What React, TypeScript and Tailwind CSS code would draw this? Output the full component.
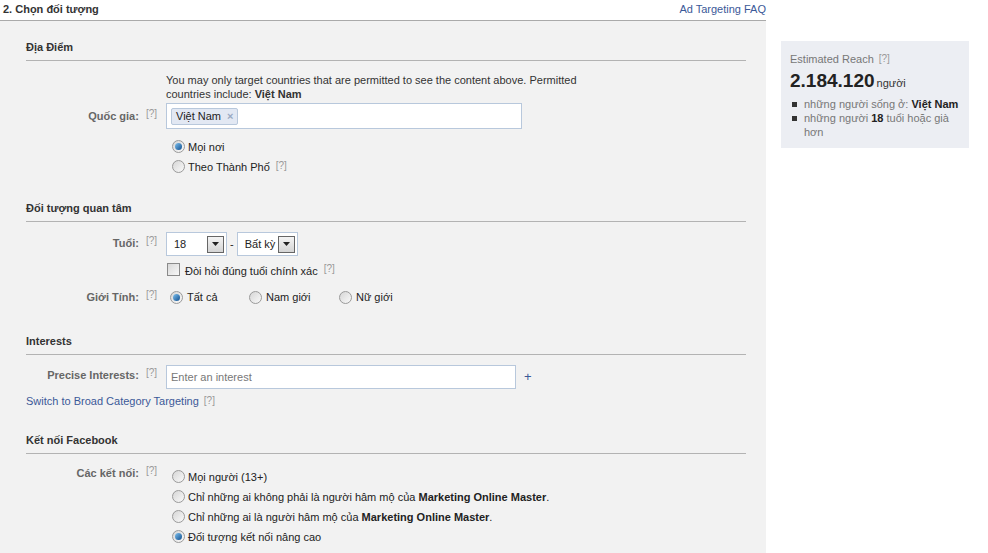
import React from 'react';

const font = "font-['Liberation_Sans',Arial,sans-serif]";

const Help: React.FC<{ className?: string }> = ({ className }) => (
  <span className={`text-[10px] leading-[14px] text-[#999] ${className ?? ''}`}>[?]</span>
);

const Radio: React.FC<{ checked?: boolean }> = ({ checked }) => (
  <span className="relative inline-flex h-[13px] w-[13px] shrink-0 items-center justify-center rounded-full border border-[#9a9a9a] bg-gradient-to-br from-[#d6d6d6] to-[#fafafa]">
    {checked && (
      <span className="h-[7px] w-[7px] rounded-full bg-gradient-to-br from-[#7fc2ef] to-[#0a4f8f]" />
    )}
  </span>
);

const SectionTitle: React.FC<{ children: React.ReactNode; className?: string }> = ({
  children,
  className,
}) => (
  <div className={`mr-5 border-b border-[#b3b3b3] pb-[6px] text-[11px] font-bold leading-[14px] text-[#333] ${className ?? ''}`}>
    {children}
  </div>
);

const Row: React.FC<{ label: string; children: React.ReactNode; className?: string; labelClass?: string }> = ({
  label,
  children,
  className,
  labelClass,
}) => (
  <div className={`flex ${className ?? ''}`}>
    <div className={`flex w-[166px] shrink-0 items-start justify-end gap-[7px] pr-[9px] ${labelClass ?? ''}`}>
      <span className="text-[11px] font-bold text-[#666]">{label}</span>
      <Help className="mt-[-2px]" />
    </div>
    <div className="flex-1">{children}</div>
  </div>
);

const Select: React.FC<{ value: string; width: string }> = ({ value, width }) => (
  <div className={`flex h-[24px] items-center border border-[#b8c8dc] bg-white pl-[7px] pr-[2px] ${width}`}>
    <span className="flex-1 text-[11px] text-[#222]">{value}</span>
    <span className="flex h-[17px] w-[17px] items-center justify-center border border-[#666] bg-gradient-to-b from-[#f4f4f4] to-[#d4d4d4]">
      <svg width="7" height="4" viewBox="0 0 7 4">
        <path d="M0 0h7L3.5 4z" fill="#222" />
      </svg>
    </span>
  </div>
);

const RadioLine: React.FC<{ checked?: boolean; children: React.ReactNode }> = ({ checked, children }) => (
  <label className="flex h-[14px] items-center gap-[3px]">
    <Radio checked={checked} />
    <span className="mt-[2px] text-[11px] text-[#222]">{children}</span>
  </label>
);

const App: React.FC = () => {
  return (
    <div className={`h-[553px] w-[988px] overflow-hidden bg-white ${font} text-[11px] leading-[14px] text-[#333]`}>
      <div className="flex items-start">
        {/* main column */}
        <div className="w-[766px]">
          <div className="flex h-[21px] items-center justify-between border-b border-[#aaa] pl-[3px] pb-[3px]">
            <span className="text-[11px] font-bold text-[#333]">2. Chọn đối tượng</span>
            <a className="text-[11px] text-[#3b5998]">Ad Targeting FAQ</a>
          </div>

          <div className="h-[533px] bg-[#f2f2f2] pl-[26px] pt-[19px]">
            {/* Địa điểm */}
            <SectionTitle>Địa Điểm</SectionTitle>
            <div className="ml-[-26px] mt-[12px]">
              <div className="flex">
                <div className="w-[166px] shrink-0" />
                <p className="w-[430px] text-[11px] text-[#333]">
                  You may only target countries that are permitted to see the content above. Permitted
                  countries include: <b>Việt Nam</b>
                </p>
              </div>
              <Row label="Quốc gia:" className="mt-[2px]" labelClass="pt-[6px]">
                <div className="flex h-[26px] w-[356px] items-center border border-[#b8c8dc] bg-white px-[4px]">
                  <span className="flex h-[17px] items-center gap-[6px] rounded-[2px] border border-[#b8c8dc] bg-[#e2e8f3] px-[4px] text-[11px] text-[#222]">
                    Việt Nam <span className="text-[11px] font-bold text-[#9aa8c2]">×</span>
                  </span>
                </div>
                <div className="mt-[10px] flex flex-col gap-[6px] pl-[6px]">
                  <RadioLine checked>Mọi nơi</RadioLine>
                  <label className="flex h-[14px] items-center gap-[3px]">
                    <Radio />
                    <span className="mt-[2px] text-[11px] text-[#222]">Theo Thành Phố</span>
                    <Help className="ml-[3px]" />
                  </label>
                </div>
              </Row>
            </div>

            {/* Đối tượng quan tâm */}
            <SectionTitle className="mt-[28px]">Đối tượng quan tâm</SectionTitle>
            <div className="ml-[-26px] mt-[10px]">
              <Row label="Tuổi:" labelClass="pt-[4px]">
                <div className="flex items-center gap-[3px]">
                  <Select value="18" width="w-[61px]" />
                  <span className="text-[11px] text-[#222]">-</span>
                  <Select value="Bất kỳ" width="w-[61px]" />
                </div>
                <label className="mt-[6px] flex h-[14px] items-center gap-[5px] pl-[1px]">
                  <span className="h-[13px] w-[13px] border border-[#8a8a8a] bg-gradient-to-br from-[#d8d8d8] to-[#f8f8f8]" />
                  <span className="mt-[3px] text-[11px] text-[#222]">Đòi hỏi đúng tuổi chính xác</span>
                  <Help className="ml-[1px]" />
                </label>
              </Row>
              <Row label="Giới Tính:" className="mt-[14px]">
                <div className="flex h-[14px] items-center pl-[4px]">
                  <label className="flex w-[79px] items-center gap-[4px]">
                    <Radio checked />
                    <span className="text-[11px] text-[#222]">Tất cả</span>
                  </label>
                  <label className="flex w-[90px] items-center gap-[4px]">
                    <Radio />
                    <span className="text-[11px] text-[#222]">Nam giới</span>
                  </label>
                  <label className="flex items-center gap-[4px]">
                    <Radio />
                    <span className="text-[11px] text-[#222]">Nữ giới</span>
                  </label>
                </div>
              </Row>
            </div>

            {/* Interests */}
            <SectionTitle className="mt-[30px]">Interests</SectionTitle>
            <div className="ml-[-26px] mt-[10px]">
              <Row label="Precise Interests:" labelClass="pt-[3px]">
                <div className="flex items-center">
                  <div className="flex h-[24px] w-[350px] items-center border border-[#b8c8dc] bg-white px-[4px] text-[11px] text-[#777]">
                    Enter an interest
                  </div>
                  <span className="ml-[8px] text-[13px] text-[#3b5998]">+</span>
                </div>
              </Row>
            </div>
            <div className="mt-[5px] flex items-center gap-[5px]">
              <a className="text-[11px] text-[#3b5998]">Switch to Broad Category Targeting</a>
              <Help />
            </div>

            {/* Kết nối Facebook */}
            <SectionTitle className="mt-[25px]">Kết nối Facebook</SectionTitle>
            <div className="ml-[-26px] mt-[15px]">
              <Row label="Các kết nối:" labelClass="mt-[-3px]">
                <div className="flex flex-col gap-[6px] pl-[6px]">
                  <RadioLine>Mọi người (13+)</RadioLine>
                  <RadioLine>
                    Chỉ những ai không phải là người hâm mộ của <b>Marketing Online Master</b>.
                  </RadioLine>
                  <RadioLine>
                    Chỉ những ai là người hâm mộ của <b>Marketing Online Master</b>.
                  </RadioLine>
                  <RadioLine checked>Đối tượng kết nối nâng cao</RadioLine>
                </div>
              </Row>
            </div>
          </div>
        </div>

        {/* Estimated reach */}
        <div className="ml-[15px] mt-[41px] h-[107px] w-[188px] bg-[#eceef3] px-[9px] pt-[11px]">
          <div className="flex items-center gap-[5px] text-[11px] text-[#777]">
            Estimated Reach <Help />
          </div>
          <div className="mt-[4px] flex h-[22px] items-baseline gap-[2px] leading-[22px]">
            <span className="text-[19px] font-bold text-[#222]">2.184.120</span>
            <span className="text-[11px] text-[#333]">người</span>
          </div>
          <ul className="mt-[5px] flex flex-col text-[11px] text-[#777]">
            <li className="flex gap-[7px] pl-[2px]">
              <span className="mt-[5px] h-[5px] w-[5px] shrink-0 bg-[#333]" />
              <span>
                những người sống ở: <b className="text-[#222]">Việt Nam</b>
              </span>
            </li>
            <li className="flex gap-[7px] pl-[2px]">
              <span className="mt-[5px] h-[5px] w-[5px] shrink-0 bg-[#333]" />
              <span>
                những người <b className="text-[#222]">18</b> tuổi hoặc già hơn
              </span>
            </li>
          </ul>
        </div>
      </div>
    </div>
  );
};

export default App;
